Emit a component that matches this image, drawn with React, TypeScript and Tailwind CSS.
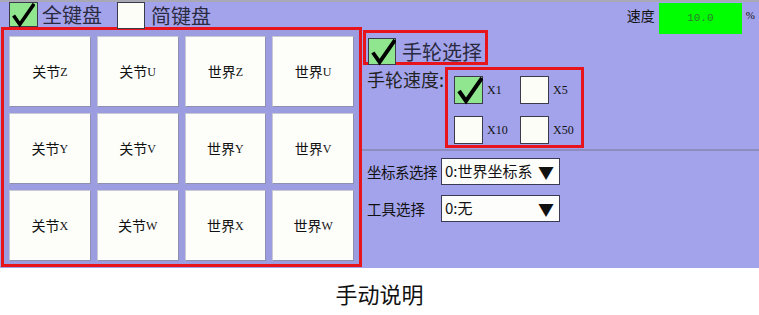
const cjk = "'Noto Sans CJK SC', 'Noto Sans', sans-serif";

const Check = ({ size = 28 }: { size?: number }) => (
  <svg width={size} height={size} viewBox="0 0 28 28" className="absolute inset-0">
    <path d="M4 14 L11 24 L27 1" fill="none" stroke="#000" strokeWidth="4" strokeLinejoin="miter" />
  </svg>
);

const Box = ({ checked, w = 28, h = 28 }: { checked?: boolean; w?: number; h?: number }) => (
  <div
    className={`relative shrink-0 border border-[#3a3a4a] ${checked ? "bg-[#8fe68f]" : "bg-[#fdfdf8]"}`}
    style={{ width: w, height: h }}
  >
    {checked && <Check size={Math.min(w, h)} />}
  </div>
);

const keys = [
  ["关节", "Z"], ["关节", "U"], ["世界", "Z"], ["世界", "U"],
  ["关节", "Y"], ["关节", "V"], ["世界", "Y"], ["世界", "V"],
  ["关节", "X"], ["关节", "W"], ["世界", "X"], ["世界", "W"],
];

const Select = ({ value }: { value: string }) => (
  <div className="flex h-[27px] w-[119px] items-center justify-between border border-[#3a3a55] bg-[#fdfdfb] pl-[3px] pr-[5px] text-[15px] text-[#111]">
    <span>{value}</span>
    <span className="text-[16px] leading-none">▼</span>
  </div>
);

export default function App() {
  return (
    <div className="w-[759px] h-[315px] bg-white overflow-hidden" style={{ fontFamily: cjk }}>
      <div className="h-[268px] bg-[#a3a3eb] border-t-2 border-[#a9a9b6] flex flex-col">
        {/* top strip */}
        <div className="h-[25px] flex items-start text-[20px] leading-none text-[#222]">
          <div className="ml-[9px] flex items-center gap-[4px]">
            <Box checked w={29} h={25} />
            <span className="text-[#2a2a40]">全键盘</span>
          </div>
          <div className="ml-[15px] flex items-center gap-[6px]">
            <Box w={28} h={27} />
            <span className="text-[#2a2a40]">简键盘</span>
          </div>
          <div className="ml-auto mr-[4px] flex items-start">
            <span className="mt-[6px] text-[14px] text-[#111]">速度</span>
            <div className="ml-[4px] mt-[1px] h-[31px] w-[83px] bg-[#00ff00] flex items-center justify-center text-[11px] text-[#2c7d2c]" style={{ fontFamily: "'Liberation Mono', monospace" }}>
              10.0
            </div>
            <span className="ml-[4px] mt-[8px] text-[11px] text-[#111]" style={{ fontFamily: "'Liberation Serif', serif" }}>%</span>
          </div>
        </div>

        <div className="flex flex-1">
          {/* key grid */}
          <div className="ml-[1px] w-[361px] h-[240px] border-[3px] border-[#e8141c] bg-[#9c9ce0] grid grid-cols-4 gap-[6px] px-[5px] pt-[6px] pb-[3px]">
            {keys.map(([a, b], i) => (
              <div
                key={i}
                className="h-[71px] bg-[#fdfdfa] border border-[#c9c9d6] border-b-[#8f8fb0] border-r-[#8f8fb0] flex items-center justify-center text-[14px] text-[#111]"
              >
                <span>{a}</span>
                <span className="text-[12px]" style={{ fontFamily: "'Liberation Serif', serif" }}>{b}</span>
              </div>
            ))}
          </div>

          {/* right panel */}
          <div className="flex-1 flex flex-col">
            <div className="mt-[3px] ml-[1px] w-[125px] h-[35px] border-[3px] border-[#e8141c] flex items-start">
              <div className="mt-[5px] ml-[2px] flex items-center gap-[6px]">
                <Box checked w={28} h={27} />
                <span className="text-[20px] leading-none text-[#2a2a40]">手轮选择</span>
              </div>
            </div>

            <div className="flex items-start">
              <span className="ml-[5px] mt-[5px] whitespace-nowrap text-[18px] leading-none text-[#222]">手轮速度:</span>
              <div className="ml-[1px] mt-[2px] w-[139px] h-[81px] border-[3px] border-[#e8141c] grid grid-cols-[66px_66px] gap-y-[9px] pl-[6px] pt-[5px]">
                {[
                  ["X1", true], ["X5", false], ["X10", false], ["X50", false],
                ].map(([l, c]) => (
                  <div key={l as string} className="flex items-center gap-[4px]">
                    <Box checked={c as boolean} w={29} h={28} />
                    <span className="text-[12px] text-[#111]" style={{ fontFamily: "'Liberation Serif', serif" }}>{l as string}</span>
                  </div>
                ))}
              </div>
            </div>

            <div className="mt-[1px] h-[2px] bg-[#8d8dbd]" />

            <div className="mt-[7px] flex items-center">
              <span className="ml-[5px] w-[74px] whitespace-nowrap text-[14.5px] tracking-[-0.5px] text-[#111]">坐标系选择</span>
              <Select value="0:世界坐标系" />
            </div>
            <div className="mt-[10px] flex items-center">
              <span className="ml-[5px] w-[74px] whitespace-nowrap text-[14.5px] text-[#111]">工具选择</span>
              <Select value="0:无" />
            </div>
          </div>
        </div>
      </div>

      <div className="h-[47px] pt-[3px] flex items-center justify-center text-[22px] text-[#111]">
        手动说明
      </div>
    </div>
  );
}
